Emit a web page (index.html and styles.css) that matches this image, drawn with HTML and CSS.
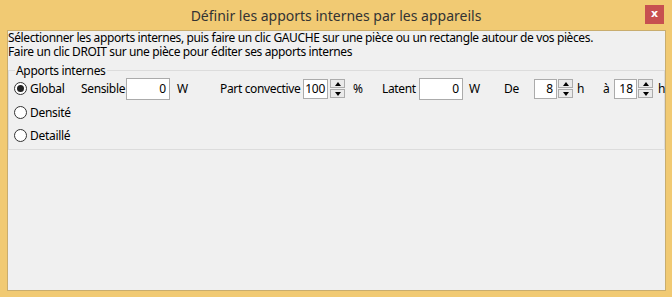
FILE: index.html
```html
<!DOCTYPE html>
<html>
<head>
  <meta charset="UTF-8" />
  <title>Définir les apports internes par les appareils</title>
  <link rel="stylesheet" href="styles.css">
</head>
<body>
  <div class="window">
    <!-- Title bar -->
    <div class="titlebar">
      <span></span>
      <span class="title">Définir les apports internes par les appareils</span>
      <span class="close">x</span>
    </div>

    <div class="client">
      <div class="hint">Sélectionner les apports internes, puis faire un clic GAUCHE sur une pièce ou un rectangle autour de vos pièces.</div>
      <div class="hint">Faire un clic DROIT sur une pièce pour éditer ses apports internes</div>

      <fieldset class="group">
        <legend>Apports internes</legend>

        <div class="row">
          <span class="radio checked"></span>
          <span class="opt">Global</span>

          <span class="lbl sensible">Sensible</span>
          <span class="field wide">0</span>
          <span class="unit w1">W</span>

          <span class="lbl conv">Part convective</span>
          <span class="field small">100</span>
          <span class="spin"><b class="up"></b><b class="down"></b></span>
          <span class="unit pct">%</span>

          <span class="lbl latent">Latent</span>
          <span class="field wide">0</span>
          <span class="unit w2">W</span>

          <span class="lbl de">De</span>
          <span class="field tiny">8</span>
          <span class="spin"><b class="up"></b><b class="down"></b></span>
          <span class="unit h1">h</span>

          <span class="lbl a">à</span>
          <span class="field tiny">18</span>
          <span class="spin"><b class="up"></b><b class="down"></b></span>
          <span class="unit h2">h</span>
        </div>

        <div class="row">
          <span class="radio"></span>
          <span class="opt">Densité</span>
        </div>

        <div class="row last">
          <span class="radio"></span>
          <span class="opt">Detaillé</span>
        </div>
      </fieldset>
    </div>
  </div>
</body>
</html>
```

FILE: styles.css
```css
* {
  box-sizing: border-box;
}
body {
  margin: 0;
  font-family: 'Noto Sans', 'Open Sans', sans-serif;
  font-size: 12px;
  color: #000;
}
.window {
  width: 672px;
  height: 297px;
  background: #f1ca73;
  display: flex;
  flex-direction: column;
}
.titlebar {
  height: 30px;
  display: grid;
  grid-template-columns: 1fr auto 1fr;
  align-items: center;
}
.title {
  font-size: 14px;
  color: #333;
  padding-top: 1px;
  white-space: nowrap;
}
.close {
  justify-self: end;
  width: 19px;
  height: 19px;
  margin-right: 8px;
  margin-top: -1px;
  background: #c75050;
  color: #fff;
  font-weight: bold;
  font-size: 11px;
  line-height: 18px;
  text-align: center;
  font-family: 'DejaVu Sans', sans-serif;
}
.client {
  flex: 1;
  margin: 0 6px 6px 7px;
  background: #f0f0f0;
  border: 1px solid #c9ad6e;
}
.hint {
  line-height: 14px;
  height: 14px;
  letter-spacing: -0.38px;
  white-space: nowrap;
}
.group {
  margin: 5px 0 0 0;
  padding: 0 0 2px 5px;
  border: 1px solid #dcdcdc;
  min-width: 0;
}
.group legend {
  margin-left: 1px;
  padding: 0 1px;
  line-height: 13px;
  letter-spacing: -0.3px;
}
.row {
  display: flex;
  align-items: center;
  height: 24px;
  white-space: nowrap;
}
.row > * {
  flex-shrink: 0;
}
.row:first-of-type {
  height: 23px;
}
.row.last {
  height: 23px;
}
.radio {
  width: 13px;
  height: 13px;
  border: 1px solid #333;
  border-radius: 50%;
  background: #fff;
  display: flex;
  align-items: center;
  justify-content: center;
}
.radio.checked::after {
  content: "";
  width: 7px;
  height: 7px;
  border-radius: 50%;
  background: #222;
}
.opt {
  margin-left: 3px;
  letter-spacing: -0.3px;
}
.lbl, .unit {
  letter-spacing: -0.35px;
}
.field {
  background: #fff;
  border: 1px solid #ababab;
  text-align: right;
  padding-right: 3px;
  height: 20px;
  line-height: 18px;
}
.field.wide {
  width: 44px;
  height: 22px;
  line-height: 20px;
}
.field.small {
  width: 25px;
  padding-right: 2px;
  letter-spacing: -0.3px;
}
.field.tiny {
  width: 23px;
}
.spin {
  display: flex;
  flex-direction: column;
  gap: 1px;
  margin-left: 1px;
}
.spin b {
  width: 15px;
  height: 9px;
  border: 1px solid #acacac;
  background: #eaeaea;
  display: flex;
  align-items: center;
  justify-content: center;
}
.spin b::after {
  content: "";
  border-left: 3px solid transparent;
  border-right: 3px solid transparent;
}
.spin .up::after {
  border-bottom: 4px solid #000;
}
.spin .down::after {
  border-top: 4px solid #000;
}
/* column slots matching the dialog's fixed control positions */
.row:first-of-type .opt { width: 51px; }
.sensible { width: 45px; }
.w1 { margin-left: 7px; width: 43px; }
.conv { width: 83px; }
.field.small + .spin { margin-left: 2px; }
.pct { margin-left: 8px; width: 29px; }
.latent { width: 37px; }
.w2 { margin-left: 6px; width: 35px; }
.de { width: 30px; }
.h1 { margin-left: 4px; width: 26px; }
.a { width: 11px; }
.h2 { margin-left: 5px; }
```
